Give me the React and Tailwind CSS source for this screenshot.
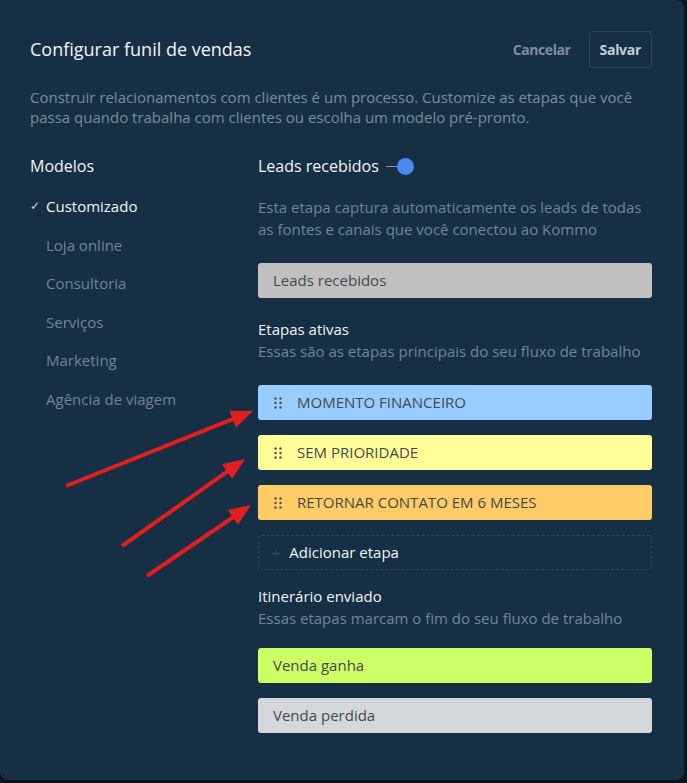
import React from 'react';

const MODELS = ['Loja online', 'Consultoria', 'Serviços', 'Marketing', 'Agência de viagem'];

const ACTIVE_STAGES = [
  { label: 'MOMENTO FINANCEIRO', color: 'bg-[#99ccff]' },
  { label: 'SEM PRIORIDADE', color: 'bg-[#ffff99]' },
  { label: 'RETORNAR CONTATO EM 6 MESES', color: 'bg-[#ffcc66]' }
];

function DragHandle() {
  return (
    <svg width="8" height="12" viewBox="0 0 8 12" className="shrink-0">
      {[1.5, 6.5].map((x) =>
        [1.5, 6, 10.5].map((y) => <circle key={`${x}-${y}`} cx={x} cy={y} r="1.2" fill="#4b4f55" />)
      )}
    </svg>
  );
}

function Arrows() {
  const arrows = [
    { x1: 66, y1: 486, x2: 253, y2: 411 },
    { x1: 122, y1: 546, x2: 245, y2: 459 },
    { x1: 147, y1: 576, x2: 251, y2: 505 }
  ];
  return (
    <svg className="pointer-events-none absolute left-0 top-0" width="687" height="783">
      {arrows.map(({ x1, y1, x2, y2 }, i) => {
        const angle = Math.atan2(y2 - y1, x2 - x1);
        const len = 22;
        const half = 9;
        const bx = x2 - len * Math.cos(angle);
        const by = y2 - len * Math.sin(angle);
        const px = -Math.sin(angle) * half;
        const py = Math.cos(angle) * half;
        return (
          <g key={i}>
            <line x1={x1} y1={y1} x2={bx + 2 * Math.cos(angle)} y2={by + 2 * Math.sin(angle)} stroke="#e31e1e" strokeWidth="4" />
            <polygon points={`${x2},${y2} ${bx + px},${by + py} ${bx - px},${by - py}`} fill="#e31e1e" />
          </g>
        );
      })}
    </svg>
  );
}

export default function App() {
  return (
    <div className="relative h-[783px] w-[687px] overflow-hidden bg-[#0c151d] font-['Open_Sans','Noto_Sans',sans-serif]">
      <div className="h-[780px] w-[684px] rounded-b-lg rounded-tr-lg bg-[#162f44] pl-[30px] pr-[32px] pt-[31px]">
        <div className="flex h-[37px] items-center justify-between">
          <h1 className="text-[18px] text-[#f2f4f6]">Configurar funil de vendas</h1>
          <div className="flex h-full items-center gap-[18px]">
            <button type="button" className="text-[14px] font-bold tracking-[-0.4px] text-[#7f8ea0]">Cancelar</button>
            <button type="button" className="h-full rounded-[4px] border border-[#2a4660] px-[10px] text-[14px] font-bold tracking-[-0.3px] text-[#c5ced7]">
              Salvar
            </button>
          </div>
        </div>

        <p className="mt-[19px] pr-[10px] text-[15px] leading-[20px] text-[#7d8c9e]">
          Construir relacionamentos com clientes é um processo. Customize as etapas que você passa quando trabalha com clientes ou escolha um modelo pré-pronto.
        </p>

        <div className="mt-[27px] flex">
          <div className="w-[228px] shrink-0">
            <h2 className="text-[16px] leading-[24px] text-[#f2f4f6]">Modelos</h2>
            <ul className="mt-[9px]">
              <li className="flex h-[38.5px] items-center text-[15px] text-[#f2f4f6]">
                <span className="w-[16px] text-[12px] text-[#d0d6dc]">✓</span>
                Customizado
              </li>
              {MODELS.map((model) => (
                <li key={model} className="flex h-[38.5px] items-center pl-[16px] text-[15px] text-[#74849a]">
                  {model}
                </li>
              ))}
            </ul>
          </div>

          <div className="min-w-0 flex-1">
            <div className="flex h-[24px] items-center">
              <h2 className="text-[16px] text-[#f2f4f6]">Leads recebidos</h2>
              <span className="ml-[7px] h-px w-[11px] bg-[#8796a6]"></span>
              <span className="h-[17px] w-[17px] rounded-full bg-[#4a88f2]"></span>
            </div>
            <p className="mt-[18px] text-[15px] leading-[22px] text-[#74849a]">
              Esta etapa captura automaticamente os leads de todas as fontes e canais que você conectou ao Kommo
            </p>
            <div className="mt-[23px] flex h-[35px] items-center rounded-[3px] bg-[#c1c1c1] px-[15px] text-[15px] text-[#45494e]">
              Leads recebidos
            </div>

            <h3 className="mt-[20px] text-[15px] leading-[22px] text-[#f2f4f6]">Etapas ativas</h3>
            <p className="text-[15px] leading-[22px] text-[#74849a]">Essas são as etapas principais do seu fluxo de trabalho</p>

            <div className="mt-[23px] flex flex-col gap-[15px]">
              {ACTIVE_STAGES.map((stage) => (
                <div key={stage.label} className={`flex h-[35px] items-center gap-[15px] rounded-[3px] px-[16px] text-[15px] text-[#45494e] ${stage.color}`}>
                  <DragHandle />
                  {stage.label}
                </div>
              ))}
              <div className="flex h-[35px] items-center gap-[8px] rounded-[3px] border border-dashed border-[#2d4860] px-[12px] text-[15px] text-[#f2f4f6]">
                <span className="text-[18px] font-light leading-none text-[#32495d]">+</span>
                Adicionar etapa
              </div>
            </div>

            <h3 className="mt-[15px] text-[15px] leading-[22px] text-[#f2f4f6]">Itinerário enviado</h3>
            <p className="text-[15px] leading-[22px] text-[#74849a]">Essas etapas marcam o fim do seu fluxo de trabalho</p>

            <div className="mt-[19px] flex flex-col gap-[15px]">
              <div className="flex h-[35px] items-center rounded-[3px] bg-[#ccff66] px-[15px] text-[15px] text-[#45494e]">Venda ganha</div>
              <div className="flex h-[35px] items-center rounded-[3px] bg-[#d5d8db] px-[15px] text-[15px] text-[#45494e]">Venda perdida</div>
            </div>
          </div>
        </div>
      </div>
      <Arrows />
    </div>
  );
}
